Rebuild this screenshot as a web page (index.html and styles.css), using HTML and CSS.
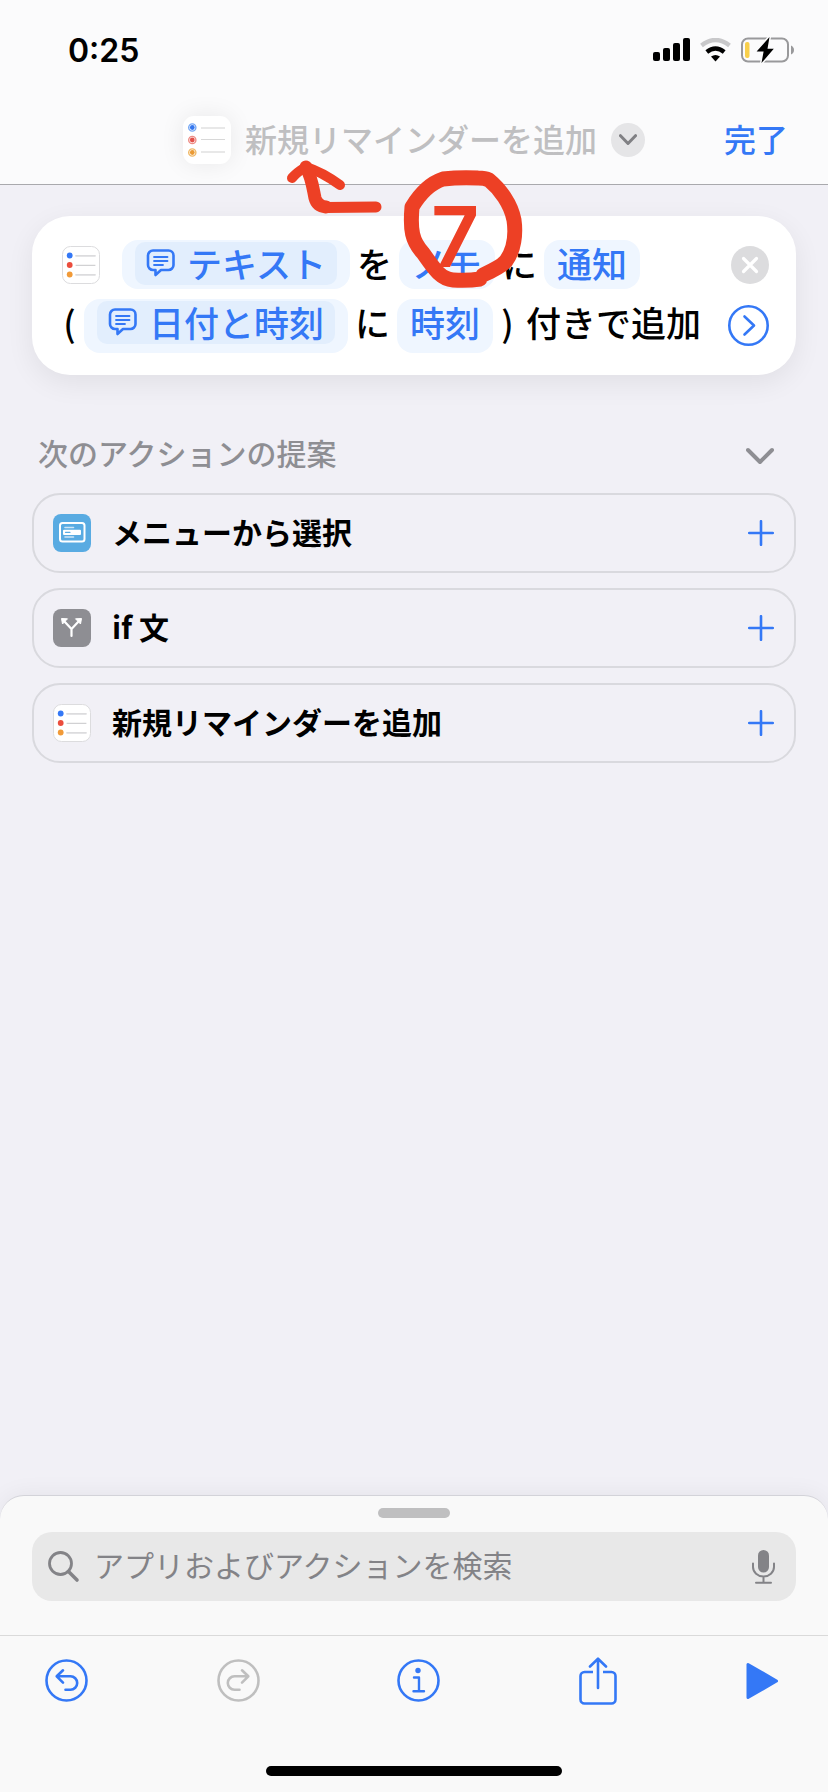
FILE: index.html
```
<!DOCTYPE html>
<html lang="ja">
<head>
    <meta charset="UTF-8">
    <meta name="viewport" content="width=device-width, initial-scale=1.0">
    <title>新規リマインダーを追加</title>
    <link rel="stylesheet" href="styles.css">
</head>
<body>

    <svg class="defs" width="0" height="0" aria-hidden="true">
        <symbol id="bubble" viewBox="0 0 29 28">
            <path d="M7 1.5h15.500a5 5 0 0 1 5 5v9.500a5 5 0 0 1-5 5H15l-5.500 5v-5H7a5 5 0 0 1-5-5V6.500a5 5 0 0 1 5-5z" fill="none" stroke="currentColor" stroke-width="2.600" stroke-linejoin="round"/>
            <path d="M8 8h13.500M8 12h13.500M8 16h9" stroke="currentColor" stroke-width="1.800" stroke-linecap="round"/>
        </symbol>
        <symbol id="reminders" viewBox="0 0 38 38">
            <rect x=".5" y=".5" width="37" height="37" rx="8" fill="#fff" stroke="#dcdcde"/>
            <circle cx="7.700" cy="9.500" r="2.900" fill="#3478f6"/>
            <circle cx="7.700" cy="19" r="2.900" fill="#eb4d3d"/>
            <circle cx="7.700" cy="28.500" r="2.900" fill="#f19a38"/>
            <path d="M14 9.800h19M14 28.800h19" stroke="#dcdcde" stroke-width="1.800" stroke-linecap="round"/>
            <path d="M14 19.300h19" stroke="#c6c6c8" stroke-linecap="round"/>
        </symbol>
        <symbol id="plus" viewBox="0 0 26 26">
            <path d="M13 1.200v23.600M1.200 13h23.600" stroke="currentColor" stroke-width="2.600" stroke-linecap="round"/>
        </symbol>
    </svg>

    <header class="header">
        <div class="status">
            <span class="time">0:25</span>
            <div class="status-icons">
                <svg width="37" height="24" viewBox="0 0 37 24">
                    <rect x="0" y="14" width="7" height="9" rx="2"/>
                    <rect x="10" y="10" width="7" height="13" rx="2"/>
                    <rect x="20" y="5" width="7" height="18" rx="2"/>
                    <rect x="30" y="0" width="7" height="23" rx="2"/>
                </svg>
                <svg width="31" height="24" viewBox="0 0 31 24">
                    <path d="M1.500 7.500Q15.500-3.500 29.500 7.500" fill="none" stroke="#c8c8ca" stroke-width="4.400"/>
                    <path d="M6.800 14Q15.500 7 24.200 14" fill="none" stroke="#000" stroke-width="4.400"/>
                    <path d="M11 18.600Q15.500 15.400 20 18.600L15.500 23.500z"/>
                </svg>
                <svg width="53" height="26" viewBox="0 0 53 26">
                    <rect x="1" y="1.500" width="46" height="23" rx="6" fill="none" stroke="#99999b" stroke-width="2"/>
                    <path d="M50 8.500q3 1.500 3 4.500t-3 4.500z" fill="#99999b"/>
                    <rect x="4" y="5" width="4.500" height="16" rx="2" fill="#f8cf4b"/>
                    <path d="M28.500 0L15.600 14.500h7L20.500 26 32.800 11.800h-6.300z" stroke="#fbfbfc" stroke-width="3" paint-order="stroke"/>
                </svg>
            </div>
        </div>
        <div class="nav">
            <div class="nav-title">
                <svg class="app-icon" width="48" height="48" viewBox="0 0 48 48">
                    <g fill="none" stroke-width="1.400">
                        <circle cx="9.300" cy="11.500" r="3.600" stroke="#76a8f5"/>
                        <circle cx="9.300" cy="24" r="3.600" stroke="#ee8d86"/>
                        <circle cx="9.300" cy="36.500" r="3.600" stroke="#f0b968"/>
                    </g>
                    <circle cx="9.300" cy="11.500" r="2.400" fill="#3577ee"/>
                    <circle cx="9.300" cy="24" r="2.400" fill="#e3504a"/>
                    <circle cx="9.300" cy="36.500" r="2.400" fill="#ea9a34"/>
                    <path d="M18 12h24M18 36h24" stroke="#e8e8e8" stroke-width="2"/>
                    <path d="M18 23.500h24" stroke="#d8d8d8"/>
                </svg>
                <h1>新規リマインダーを追加</h1>
                <button class="round" aria-label="メニュー">
                    <svg width="18" height="12" viewBox="0 0 18 12"><path d="M1.500 1.700L9 9.500l7.500-7.800" fill="none" stroke="#808084" stroke-width="3" stroke-linecap="round" stroke-linejoin="round"/></svg>
                </button>
            </div>
            <button class="done">完了</button>
        </div>
    </header>

    <main>
        <section class="card">
            <div class="line">
                <svg class="side-icon lead" width="38" height="38"><use href="#reminders"/></svg>
                <button class="pill"><span class="token"><svg width="29" height="28"><use href="#bubble"/></svg>テキスト</span></button>
                <span>を</span>
                <button class="pill">メモ</button>
                <span>に</span>
                <button class="pill">通知</button>
                <button class="side-icon end" aria-label="削除">
                    <svg width="38" height="38" viewBox="0 0 38 38">
                        <circle cx="19" cy="19" r="19" fill="#dcdcde"/>
                        <path d="M12.500 12.500l13 13M25.500 12.500l-13 13" stroke="#fff" stroke-width="3.200" stroke-linecap="round"/>
                    </svg>
                </button>
            </div>
            <div class="line tall">
                <span class="paren">(</span>
                <button class="pill"><span class="token"><svg width="29" height="28"><use href="#bubble"/></svg>日付と時刻</span></button>
                <span>に</span>
                <button class="pill">時刻</button>
                <span class="paren">)</span>
                <span class="tail">付きで追加</span>
                <button class="side-icon end" aria-label="詳細を表示">
                    <svg width="41" height="41" viewBox="0 0 41 41" fill="none" stroke="#3478f6" stroke-width="2.600">
                        <circle cx="20.500" cy="20.500" r="19.200"/>
                        <path d="M16.500 11.500l9.500 9-9.500 9" stroke-linecap="round" stroke-linejoin="round"/>
                    </svg>
                </button>
            </div>
        </section>

        <div class="section-head">
            <h2>次のアクションの提案</h2>
            <button aria-label="折りたたむ">
                <svg width="28" height="18" viewBox="0 0 28 18"><path d="M2 3l12 12L26 3" fill="none" stroke="#8e8e93" stroke-width="4" stroke-linecap="round" stroke-linejoin="round"/></svg>
            </button>
        </div>

        <div class="suggestions">
            <button class="suggestion">
                <svg width="38" height="38" viewBox="0 0 38 38">
                    <rect width="38" height="38" rx="8" fill="#59abe2"/>
                    <rect x="7" y="9" width="24.500" height="18.500" rx="2.500" fill="none" stroke="#fff" stroke-width="2"/>
                    <path d="M12 13.500h8.500M12 23h8.500" stroke="#cfe6f7" stroke-width="1.600" stroke-linecap="round"/>
                    <rect x="10" y="15.700" width="18" height="5.200" rx="1" fill="#fff"/>
                    <path d="M12.500 18.300h4.500" stroke="#59abe2" stroke-width="1.200" stroke-linecap="round"/>
                </svg>
                <span>メニューから選択</span>
                <svg class="plus" width="26" height="26"><use href="#plus"/></svg>
            </button>
            <button class="suggestion">
                <svg width="38" height="38" viewBox="0 0 38 38">
                    <rect width="38" height="38" rx="8" fill="#8e8e93"/>
                    <path d="M18.500 27v-7L11 12M18.500 20L26 12" fill="none" stroke="#fff" stroke-width="2.200" stroke-linecap="round" stroke-linejoin="round"/>
                    <path d="M8.500 9.500l6 .3-5 5.200zM28.500 9.500l-6 .3 5 5.200z" fill="#fff" stroke="#fff" stroke-linejoin="round"/>
                </svg>
                <span>if 文</span>
                <svg class="plus" width="26" height="26"><use href="#plus"/></svg>
            </button>
            <button class="suggestion">
                <svg width="38" height="38"><use href="#reminders"/></svg>
                <span>新規リマインダーを追加</span>
                <svg class="plus" width="26" height="26"><use href="#plus"/></svg>
            </button>
        </div>
    </main>

    <footer class="sheet">
        <div class="grabber"></div>
        <div class="search">
            <svg width="32" height="32" viewBox="0 0 32 32" fill="none" stroke="#838387" stroke-linecap="round">
                <circle cx="12.500" cy="12.500" r="11" stroke-width="2.800"/>
                <path d="M20.500 20.500l8.500 8.500" stroke-width="3.600"/>
            </svg>
            <input type="search" aria-label="検索" placeholder="アプリおよびアクションを検索">
            <button aria-label="音声入力">
                <svg width="23" height="34" viewBox="0 0 23 34" fill="none" stroke="#838387" stroke-width="2" stroke-linecap="round">
                    <rect x="6" y="0" width="11" height="22.500" rx="5.500" fill="#838387" stroke="none"/>
                    <path d="M1 13.500v3.500a10.500 9.500 0 0 0 21 0v-3.500M11.500 27v5.500M4 32.700h15"/>
                </svg>
            </button>
        </div>
        <div class="toolbar">
            <button class="tool-first" aria-label="取り消す">
                <svg width="43" height="43" viewBox="0 0 43 43" fill="none" stroke="currentColor" stroke-width="2.600" stroke-linecap="round" stroke-linejoin="round">
                    <circle cx="21.500" cy="21.500" r="20"/>
                    <path d="M18 11.300l-6.300 6L18 23.600M12 17.300h13.500a6.700 6.700 0 0 1 0 13.400h-5"/>
                </svg>
            </button>
            <button aria-label="やり直す" disabled>
                <svg width="43" height="43" viewBox="0 0 43 43" fill="none" stroke="currentColor" stroke-width="2.600" stroke-linecap="round" stroke-linejoin="round">
                    <circle cx="21.500" cy="21.500" r="20"/>
                    <path d="M25 11.300l6.300 6-6.300 6.300M31 17.300H17.500a6.700 6.700 0 0 0 0 13.400h5"/>
                </svg>
            </button>
            <button aria-label="情報">
                <svg width="43" height="43" viewBox="0 0 43 43" fill="none" stroke="currentColor" stroke-width="2.600" stroke-linecap="round" stroke-linejoin="round">
                    <circle cx="21.500" cy="21.500" r="20"/>
                    <circle cx="21" cy="11.500" r="2.700" fill="currentColor" stroke="none"/>
                    <path d="M17 18.500h5v13.500M16.500 32.200h10.500" stroke-width="2.400"/>
                </svg>
            </button>
            <button aria-label="共有">
                <svg width="38" height="48" viewBox="0 0 38 48" fill="none" stroke="currentColor" stroke-width="2.600" stroke-linejoin="round">
                    <path d="M14 15H5.500a4 4 0 0 0-4 4v23.500a4 4 0 0 0 4 4h27a4 4 0 0 0 4-4V19a4 4 0 0 0-4-4H24"/>
                    <path d="M19 31V2M11 9.500L19 1.700l8 7.800" stroke-linecap="round"/>
                </svg>
            </button>
            <button class="tool-last" aria-label="実行">
                <svg width="32" height="38" viewBox="0 0 32 38"><path d="M2 2.500v33L30.500 19z" fill="currentColor" stroke="currentColor" stroke-width="3" stroke-linejoin="round"/></svg>
            </button>
        </div>
        <div class="home"></div>
    </footer>

    <!-- 手順の赤い書き込み -->
    <svg class="note" width="250" height="140" viewBox="0 0 250 140" fill="none" stroke="#ed4025" stroke-linecap="round" stroke-linejoin="round">
        <path d="M12 20Q17 14 26 9Q42 14 60 27" stroke-width="10"/>
        <path d="M26 9C32 20 33 31 35 40Q37 48 46 49" stroke-width="13"/>
        <path d="M46 49.500L96 49" stroke-width="11"/>
        <path d="M203 117C214 112 222 108 226 103C234 92 236 76 234 62C231 46 220 31 209 22Q205 20 198 20Q180 19 163 21C148 26 138 39 132 49C130 72 132 83 143 95C153 109 160 121 173 122Q188 123 200 121" stroke-width="15"/>
        <text x="151" y="109">7</text>
    </svg>

</body>
</html>
```
FILE: styles.css
```
* {
    box-sizing: border-box;
}

body {
    margin: 0;
    min-height: 100vh;
    display: flex;
    flex-direction: column;
    position: relative;
    background: #f1f0f6;
    color: #000;
    font-family: "Noto Sans CJK JP", sans-serif;
    font-size: 30px;
}

button, input {
    margin: 0;
    padding: 0;
    border: none;
    background: none;
    color: #3478f6;
    font: inherit;
}

button {
    cursor: pointer;
}

h1, h2 {
    margin: 0;
    white-space: nowrap;
}

svg {
    display: block;
    flex: none;
}

.defs {
    position: absolute;
}

/* 上部バー */
.header {
    background: #fbfbfc;
    border-bottom: 1px solid #a9a9ad;
    padding-bottom: 4px;
}

.status {
    height: 100px;
    padding: 0 34px 0 68px;
    display: flex;
    align-items: center;
    justify-content: space-between;
}

.time {
    font-family: Inter, sans-serif;
    font-size: 32px;
    font-weight: 600;
}

.status-icons {
    display: flex;
    align-items: center;
    gap: 10px;
}

.nav {
    height: 80px;
    display: grid;
    grid-template-columns: 1fr auto 1fr;
    align-items: center;
}

.nav-title {
    grid-column: 2;
    display: flex;
    align-items: center;
    gap: 14px;
}

.app-icon {
    background: #fff;
    border-radius: 11px;
    box-shadow: 0 0 24px rgba(0, 0, 0, 0.08);
}

.nav h1, .done {
    padding-bottom: 4px;
    font-size: 32px;
    font-weight: 500;
    line-height: 48px;
}

.nav h1 {
    color: #bfbfc1;
}

.round {
    width: 34px;
    height: 34px;
    border-radius: 50%;
    background: #e5e5e7;
    display: flex;
    align-items: center;
    justify-content: center;
}

.done {
    justify-self: end;
    margin-right: 40px;
}

/* アクション */
main {
    flex: 1;
    padding: 31px 32px;
}

.card {
    padding: 24px 27px 22px 30px;
    border-radius: 38px;
    background: #fff;
    box-shadow: 0 8px 28px rgba(0, 0, 0, 0.07);
    display: flex;
    flex-direction: column;
    gap: 10px;
    font-size: 35px;
    font-weight: 500;
    line-height: 41px;
}

.line {
    display: flex;
    align-items: flex-start;
    gap: 7px;
    white-space: nowrap;
}

.line > span {
    padding-top: 2px;
}

.pill {
    padding: 2px 13px 6px;
    border-radius: 16px;
    background: #eff6ff;
}

.tall .pill {
    padding-bottom: 11px;
}

.token {
    display: flex;
    align-items: center;
    gap: 12px;
    margin-bottom: -2px;
    padding: 0 11px 2px;
    border-radius: 10px;
    background: #e2eefd;
}

.side-icon {
    margin-top: 6px;
}

.lead {
    margin-right: 15px;
}

.end {
    margin-left: auto;
}

.paren {
    width: 15px;
    text-align: center;
}

.tail {
    margin-left: 4px;
}

/* 提案リスト */
.section-head {
    margin: 57px 0 13px;
    padding: 0 22px 0 6px;
    display: flex;
    align-items: center;
    justify-content: space-between;
}

.section-head h2 {
    padding-bottom: 8px;
    font-size: 30px;
    font-weight: 500;
    line-height: 40px;
    color: #8e8e93;
}

.suggestions {
    display: flex;
    flex-direction: column;
    gap: 15px;
}

.suggestion {
    height: 80px;
    padding: 0 20px 0 19px;
    border: 2px solid #d9d9de;
    border-radius: 28px;
    display: flex;
    align-items: center;
    gap: 21px;
    color: #000;
    font-weight: 600;
    line-height: 40px;
}

.suggestion span {
    padding-bottom: 4px;
}

.plus {
    margin-left: auto;
    color: #3478f6;
}

/* 下部シート */
.sheet {
    border-top: 1px solid #d3d3d9;
    border-radius: 24px 24px 0 0;
    background: #f9f9f9;
    box-shadow: 0 0 24px rgba(0, 0, 0, 0.06);
    padding: 12px 0 16px;
}

.grabber {
    width: 72px;
    height: 10px;
    margin: 0 auto 14px;
    border-radius: 5px;
    background: #bfbfc0;
}

.search {
    height: 69px;
    margin: 0 32px 34px;
    padding: 0 21px 0 16px;
    border-radius: 20px;
    background: #e8e8e8;
    display: flex;
    align-items: center;
    gap: 14px;
}

.search input {
    flex: 1;
    min-width: 0;
    padding-bottom: 6px;
    outline: none;
    line-height: 44px;
    appearance: none;
}

.search input::placeholder {
    color: #838387;
    opacity: 1;
}

.toolbar {
    height: 90px;
    padding: 0 50px 0 42px;
    border-top: 1px solid #dadada;
    display: flex;
    align-items: center;
    justify-content: space-between;
}

.toolbar button {
    width: 64px;
    display: flex;
    justify-content: center;
}

.toolbar .tool-first {
    width: 48px;
}

.toolbar .tool-last {
    width: 32px;
}

.toolbar button:disabled {
    color: #bfbfbf;
}

.home {
    width: 296px;
    height: 10px;
    margin: 41px auto 0;
    border-radius: 5px;
    background: #000;
}

/* 書き込みは画面の上に重ねる */
.note {
    position: absolute;
    top: 158px;
    left: 280px;
    pointer-events: none;
}

.note text {
    fill: #ed4025;
    stroke: none;
    font-family: Inter, sans-serif;
    font-size: 84px;
    font-weight: 600;
}
```
